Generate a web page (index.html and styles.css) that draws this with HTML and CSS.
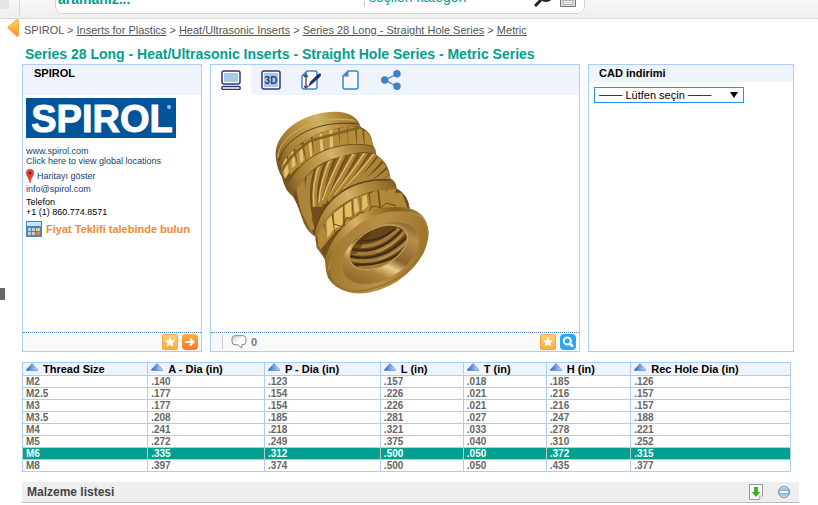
FILE: index.html
```
<!DOCTYPE html>
<html lang="tr">
<head>
<meta charset="utf-8">
<title>SPIROL - Series 28 Long</title>
<link rel="stylesheet" href="styles.css">
</head>
<body>
<header class="top">
  <span class="top-block"></span>
  <form class="search">
    <input class="search-text" type="text" value="aramanız..." aria-label="Arama">
    <select class="search-cat" aria-label="Kategori"><option>seçilen kategori</option></select>
    <svg class="chev" width="8" height="6" viewBox="0 0 8 6"><path d="M1 1l3 3 3-3" fill="none" stroke="#999" stroke-width="1.5"/></svg>
    <button class="plain" type="button" aria-label="Ara"><svg width="22" height="22" viewBox="0 0 22 22"><circle cx="14" cy="9" r="7" fill="none" stroke="#222" stroke-width="2"/><path d="M9 15l-6 6" stroke="#222" stroke-width="3"/></svg></button>
    <button class="plain" type="button" aria-label="Klavye"><svg width="16" height="20" viewBox="0 0 16 20"><path d="M.5 0v19.500h15V0" fill="#ddd" stroke="#777"/><path d="M3 13.500h10v4H3z" fill="#fff" stroke="#aaa"/><path d="M4 15.500h8" stroke="#bbb"/></svg></button>
  </form>
</header>

<nav class="crumbs">
  <a class="back" href="#" aria-label="Geri"><svg width="12" height="18" viewBox="0 0 12 18"><defs><linearGradient id="bk" x2="0" y2="1"><stop offset="0" stop-color="#ffda55"/><stop offset="1" stop-color="#f98a3c"/></linearGradient></defs><path d="M.5 8.500L9.500.8Q11.500 0 11.500 2v14q0 2-2 1z" fill="url(#bk)" stroke="#f6a640"/></svg></a>
  <span>SPIROL &gt; <a href="#">Inserts for Plastics</a> &gt; <a href="#">Heat/Ultrasonic Inserts</a> &gt; <a href="#">Series 28 Long - Straight Hole Series</a> &gt; <a href="#">Metric</a></span>
</nav>

<main class="page">
<h1>Series 28 Long - Heat/Ultrasonic Inserts - Straight Hole Series - Metric Series</h1>

<div class="panels">
  <section class="panel">
    <h2 class="panel-head tall">SPIROL</h2>
    <div class="company">
      <div class="logo"><span>SPIROL</span><i></i></div>
      <a href="#">www.spirol.com</a>
      <a href="#">Click here to view global locations</a>
      <a class="map" href="#"><svg width="8" height="14" viewBox="0 0 8 14"><path d="M4 0a4 4 0 0 1 4 4c0 3-3 5-3.500 10h-1C3 9 0 7 0 4a4 4 0 0 1 4-4z" fill="#e5463a"/><circle cx="4" cy="4" r="1.500" fill="#7d1712"/></svg>Haritayı göster</a>
      <a href="#">info@spirol.com</a>
      <p class="phone">Telefon<br>+1 (1) 860.774.8571</p>
      <a class="quote" href="#"><svg width="16" height="16" viewBox="0 0 16 16"><path d="M0 0h16v16H0z" fill="#4d84b5"/><path d="M1 1h14v4H1z" fill="#bfe6fb"/><path d="M2 7h3v3H2zM6 7h3v3H6zM10 7h4v3h-4zM2 11h3v3H2zM6 11h3v3H6z" fill="#c6ccd2"/><path d="M10 11h4v3h-4z" fill="#f58220"/></svg>Fiyat Teklifi talebinde bulun</a>
    </div>
    <footer class="panel-foot">
      <button class="plain push" type="button" aria-label="Favori"><svg width="16" height="16" viewBox="0 0 16 16"><defs><linearGradient id="st" x2="0" y2="1"><stop offset="0" stop-color="#ffd27a"/><stop offset="1" stop-color="#fdaa38"/></linearGradient></defs><rect x=".5" y=".5" width="15" height="15" rx="1" fill="url(#st)" stroke="#f0a94a"/><path d="M8 3l1.500 3.300 3.600.4-2.700 2.400.8 3.500L8 10.800l-3.200 1.800.8-3.500-2.700-2.400 3.600-.4z" fill="#fff"/></svg></button>
      <button class="plain" type="button" aria-label="İleri"><svg width="16" height="16" viewBox="0 0 16 16"><defs><linearGradient id="go" x2="0" y2="1"><stop offset="0" stop-color="#ffb02e"/><stop offset="1" stop-color="#fa742f"/></linearGradient></defs><rect width="16" height="16" rx="4" fill="url(#go)"/><path d="M3 8h8M8 4.500L11.500 8 8 11.500" fill="none" stroke="#fff" stroke-width="2"/></svg></button>
    </footer>
  </section>

  <section class="panel">
    <div class="tabs">
      <button class="tab active" type="button" aria-label="Resim"><svg width="20" height="20" viewBox="0 0 20 20"><rect x="1" y="1" width="18" height="13" rx="2" fill="#fff" stroke="#333377" stroke-width="1.500"/><path d="M3 3h14v9H3z" fill="#a5cbe8"/><rect x=".7" y="16.500" width="18.600" height="3" rx="1.500" fill="#fff" stroke="#333377" stroke-width="1.400"/></svg></button>
      <button class="tab" type="button" aria-label="3D"><svg width="20" height="20" viewBox="0 0 20 20"><rect x="1" y="1" width="18" height="18" rx="2" fill="#fff" stroke="#333377" stroke-width="1.500"/><path d="M3 3h14v14H3z" fill="#a5cbe8"/><text class="t3d" x="10" y="13.500" text-anchor="middle">3D</text></svg></button>
      <button class="tab" type="button" aria-label="Çizim"><svg width="20" height="20" viewBox="0 0 20 20"><path d="M6 1h8q2 0 2 2v14q0 2-2 2H3q-2 0-2-2V6z" fill="#fff" stroke="#4383c6" stroke-width="1.500"/><path d="M1 6l5-5v5z" fill="#4383c6"/><path d="M5 5v13M3 7l2-2 2 2M3 16l2 2 2-2" fill="none" stroke="#444" stroke-width="1.300"/><path d="M7 17l2-5 8-8q2-1 3 0 0 2-1 3l-8 7z" fill="#2b2b70"/></svg></button>
      <button class="tab" type="button" aria-label="Belge"><svg width="20" height="20" viewBox="0 0 20 20"><path d="M7 1h8q2 0 2 2v14q0 2-2 2H4q-2 0-2-2V6z" fill="#f5f8fd" stroke="#4383c6" stroke-width="1.500"/><path d="M2 6.500L7.500 1v5.500z" fill="#4383c6"/></svg></button>
      <button class="tab" type="button" aria-label="Paylaş"><svg width="20" height="20" viewBox="0 0 20 20"><path d="M16 4L4 10l12 6.500" fill="none" stroke="#3f7fc4" stroke-width="1.300"/><g fill="#3f7fc4"><circle cx="16" cy="3.700" r="3.700"/><circle cx="3.700" cy="10" r="3.700"/><circle cx="16" cy="16.300" r="3.700"/></g></svg></button>
    </div>
    <div class="photo">
      <svg width="190" height="200" viewBox="0 0 570 600" role="img" aria-label="Insert">
        <defs>
          <linearGradient id="br" gradientUnits="userSpaceOnUse" x1="70" y1="260" x2="400" y2="130"><stop offset="0" stop-color="#6b4d1a"/><stop offset=".14" stop-color="#a07a30"/><stop offset=".32" stop-color="#bb9646"/><stop offset=".48" stop-color="#d2b266"/><stop offset=".65" stop-color="#b08a3c"/><stop offset=".85" stop-color="#8d692a"/><stop offset="1" stop-color="#624415"/></linearGradient>
          <linearGradient id="fl" gradientUnits="userSpaceOnUse" x1="190" y1="490" x2="490" y2="340"><stop offset="0" stop-color="#8f6a23"/><stop offset=".25" stop-color="#b0893a"/><stop offset=".42" stop-color="#d6b362"/><stop offset=".6" stop-color="#ab8333"/><stop offset=".8" stop-color="#805c20"/><stop offset="1" stop-color="#a8823b"/></linearGradient>
          <linearGradient id="fc" gradientUnits="userSpaceOnUse" x1="240" y1="380" x2="460" y2="550"><stop offset="0" stop-color="#a17a2e"/><stop offset=".5" stop-color="#b89147"/><stop offset="1" stop-color="#9d752c"/></linearGradient>
          <linearGradient id="bv" gradientUnits="userSpaceOnUse" x1="260" y1="530" x2="470" y2="390"><stop offset="0" stop-color="#8a6529"/><stop offset=".25" stop-color="#ad8239"/><stop offset=".38" stop-color="#ebce8d"/><stop offset=".5" stop-color="#8b632c"/><stop offset=".8" stop-color="#b78f4c"/><stop offset="1" stop-color="#7d5922"/></linearGradient>
          <clipPath id="k1"><path d="M60 210C82 145 170 75 302 80Q330 95 340 138C230 115 130 165 84 252z"/></clipPath>
          <clipPath id="k2"><path d="M98 288C130 220 220 145 347 162Q382 190 392 240C275 232 190 290 160 405z"/></clipPath>
          <clipPath id="k3"><path d="M166 420C190 330 285 270 410 265Q445 285 449 326C335 313 235 370 196 475z"/></clipPath>
          <clipPath id="bore"><ellipse cx="355" cy="442" rx="92" ry="54" transform="rotate(-29 355 442)"/></clipPath>
        </defs>
        <path d="M47 168C43 98 128 33 230 35Q292 38 302 82Q336 94 338 135Q350 148 348 166Q386 185 391 235Q410 245 410 266Q440 282 449 323L420 450 203 500Q197 478 170 443L166 411Q136 392 124 349L104 293Q75 277 66 232Q50 205 47 168z" fill="url(#br)"/>
        <path d="M53 173C60 105 155 43 284 61" fill="none" stroke="#c9aa58" stroke-width="4"/>
        <path d="M57 184C72 113 172 57 295 72" fill="none" stroke="#5e4216" stroke-width="3"/>
        <path d="M62 211C82 145 170 82 302 85" fill="none" stroke="#69491a" stroke-width="3"/>
        <g clip-path="url(#k1)">
          <path d="M50 70h310v200H50z" fill="#76531c"/>
          <path d="M70 245L62 190l17-22 16 41zM91 225l-8-62 17-14 14 51zM114 203l-9-59 20-13 13 55zM139 188l-9-65 22-13 12 61zM164 174l-7-66 22-13 12 64zM190 164l-4-69 22-10 9 66zM215 158l-2-70 21-6 7 68zM240 154l-1-72 22-2 4 70zM265 150l-1-72 21 2 5 68zM290 150l1-71 16 10 7 59zM315 148l-3-58 28 21v35z" fill="#b58c3a"/>
          <path d="M74 235l-4-51 9-11 7 45zM96 205l-3-47 7-5 7 42zM121 190l-5-49 10-6 5 46zM152 178l-7-58 8-4 4 52zM182 162l-4-59 8-4 5 57zM210 158l-2-67 9-3 3 61z" fill="#e2c274"/>
          <path d="M62 217Q91 163 151 122L301 82" fill="none" stroke="#866225" stroke-width="8"/>
        </g>
        <path d="M80 257C120 166 230 117 339 138" fill="none" stroke="#755121" stroke-width="3"/>
        <path d="M101 291C133 220 184 186 224 177L237 188 252 171Q305 150 348 163" fill="none" stroke="#77551e" stroke-width="4"/>
        <g clip-path="url(#k2)">
          <path d="M80 120h340v310H80z" fill="#735019"/>
          <g fill="none" stroke="#ab853a" stroke-width="15">
            <path d="M113 250Q135 370 160 420"/><path d="M126 235Q130 310 158 390"/><path d="M155 205Q133 270 150 355"/><path d="M186 180Q158 250 165 320"/><path d="M220 157Q184 240 180 320"/><path d="M257 150Q217 225 190 310"/><path d="M293 142Q254 220 203 302"/><path d="M327 140Q286 213 222 291"/><path d="M352 153Q304 220 248 275"/><path d="M369 165Q331 217 280 256"/><path d="M384 183Q353 223 306 249"/><path d="M398 200Q373 231 332 250"/><path d="M408 218Q389 238 360 248"/>
          </g>
          <g fill="none" stroke="#dfbf72" stroke-width="4">
            <path d="M182 184Q154 250 162 320"/><path d="M216 165Q180 240 177 306"/><path d="M252 155Q213 226 187 300"/><path d="M288 148Q249 218 201 294"/><path d="M322 145Q281 211 222 283"/><path d="M346 155Q300 218 247 268"/>
          </g>
          <g fill="none" stroke="#a0661f" stroke-width="3"><path d="M272 158Q235 230 198 300"/><path d="M310 150Q270 216 215 290"/><path d="M340 154Q294 218 240 275"/><path d="M235 170Q200 235 187 295"/></g>
        </g>
        <path d="M161 404C184 302 267 232 391 240" fill="none" stroke="#604118" stroke-width="4"/>
        <g clip-path="url(#k3)">
          <path d="M150 250h320v240H150z" fill="#704d1b"/>
          <path d="M176 455l-5-58 19-27 14 52zM201 425l-8-61 22-21 9 55zM225 396l-6-54 30-25 2 61zM255 375l-4-59 24-16 5 65zM282 361l-5-63 21-10 6 65zM304 350l-4-63 25-8 8 62zM334 340l-5-59 23-11 7 63zM364 332l-7-61 20-3 22 58zM391 328l-11-60 24 1 12 56zM416 336l-9-58 19 1 19 53z" fill="#b18838"/>
          <path d="M202 415l-2-55 14-13 7 41zM224 387l-2-48 26-20v55zM256 355l-1-40 18-11 2 43zM283 342l-2-44 10-4 7 40zM307 332v-43l12-5 5 34z" fill="#e2c068"/>
          <path d="M165 408Q207 321 286 285T410 267" fill="none" stroke="#a87f36" stroke-width="14"/>
          <path d="M222 372l24 8 14-28 22 8 16-24 24 4 16-22 26 5 14-14 30 8" fill="none" stroke="#6a491a" stroke-width="3"/>
        </g>
        <path d="M195 474Q235 363 331 331Q391 315 448 325Q501 340 506 395Q508 431 476 480Q425 552 323 576Q235 586 204 533Q195 508 195 474z" fill="url(#fl)"/>
        <path d="M205 512C216 426 308 351 401 337Q472 331 498 363" fill="none" stroke="#c9a95e" stroke-width="2"/>
        <ellipse cx="356" cy="457" rx="162" ry="103" transform="rotate(-33 356 457)" fill="url(#fc)"/>
        <ellipse cx="361" cy="459" rx="127" ry="79" transform="rotate(-31 361 459)" fill="url(#bv)" stroke="#b08a45" stroke-width="2"/>
        <ellipse cx="355" cy="442" rx="97" ry="58" transform="rotate(-29 355 442)" fill="#c09a55"/>
        <g clip-path="url(#bore)">
          <path d="M230 340h250v200H230z" fill="#65451b"/>
          <g fill="none"><path d="M264 433Q345 458 417 385M267 456Q359 482 438 390M269 479Q372 502 455 411M295 503Q386 506 445 451" stroke="#a37a38" stroke-width="11"/><path d="M286 420Q352 432 407 386M265 447Q358 468 426 391M270 469Q369 490 444 407M281 493Q377 503 450 437" stroke="#3f2a13" stroke-width="5"/><path d="M349 456Q395 440 425 406M356 479Q409 462 438 426" stroke="#c9a257" stroke-width="3"/></g>
          <path d="M260 465q4-46 47-72l42-20-60 88z" fill="#51350f" opacity=".6"/>
        </g>
        <path d="M211 529Q240 585 319 570Q441 545 494 447" fill="none" stroke="#98712c" stroke-width="4"/>
      </svg>
    </div>
    <footer class="panel-foot">
      <span class="comments"><svg width="16" height="14" viewBox="0 0 16 14"><defs><linearGradient id="cm" x2="1" y2="1"><stop offset="0" stop-color="#ccc"/><stop offset=".5" stop-color="#fff"/></linearGradient></defs><path d="M4 .7h8q3 0 3 3v3q0 3-3 3h-1l-.5 3.300L7 9.700H4q-3 0-3-3v-3q0-3 3-3z" fill="url(#cm)" stroke="#888"/></svg>0</span>
      <button class="plain push" type="button" aria-label="Favori"><svg width="16" height="16" viewBox="0 0 16 16"><rect x=".5" y=".5" width="15" height="15" rx="1" fill="url(#st)" stroke="#f0a94a"/><path d="M8 3l1.500 3.300 3.600.4-2.700 2.400.8 3.500L8 10.800l-3.200 1.800.8-3.500-2.700-2.400 3.600-.4z" fill="#fff"/></svg></button>
      <button class="plain" type="button" aria-label="Büyüt"><svg width="16" height="16" viewBox="0 0 16 16"><rect width="16" height="16" rx="4" fill="#2ba6f5"/><circle cx="7.300" cy="7" r="3.500" fill="none" stroke="#fff" stroke-width="2"/><path d="M9.800 9.500l3 3" stroke="#fff" stroke-width="2.500"/></svg></button>
    </footer>
  </section>

  <section class="panel">
    <h2 class="panel-head"><label for="cad">CAD indirimi</label></h2>
    <div class="cad">
      <select id="cad"><option>─── Lütfen seçin ───</option></select>
      <svg class="cad-arrow" width="8" height="6" viewBox="0 0 8 6"><path d="M0 0h8L4 6z"/></svg>
    </div>
  </section>
</div>

<svg class="defs" width="0" height="0"><defs><linearGradient id="tr"><stop offset="0" stop-color="#2563c8"/><stop offset="1" stop-color="#c3dcf5"/></linearGradient><symbol id="sort" viewBox="0 0 12 8"><path d="M6 .5L11.500 6.500v1H.5v-1z" fill="url(#tr)" stroke="#5b87c8" stroke-width=".7"/></symbol></defs></svg>
<table class="sizes">
  <colgroup><col class="c1"><col class="c2"><col class="c3"><col class="c4"><col class="c5"><col class="c6"><col class="c7"></colgroup>
  <thead><tr>
    <th><svg><use href="#sort"/></svg>Thread Size</th><th><svg><use href="#sort"/></svg>A - Dia (in)</th><th><svg><use href="#sort"/></svg>P - Dia (in)</th><th><svg><use href="#sort"/></svg>L (in)</th><th><svg><use href="#sort"/></svg>T (in)</th><th><svg><use href="#sort"/></svg>H (in)</th><th><svg><use href="#sort"/></svg>Rec Hole Dia (in)</th>
  </tr></thead>
  <tbody>
    <tr><td>M2</td><td>.140</td><td>.123</td><td>.157</td><td>.018</td><td>.185</td><td>.126</td></tr>
    <tr><td>M2.5</td><td>.177</td><td>.154</td><td>.226</td><td>.021</td><td>.216</td><td>.157</td></tr>
    <tr><td>M3</td><td>.177</td><td>.154</td><td>.226</td><td>.021</td><td>.216</td><td>.157</td></tr>
    <tr><td>M3.5</td><td>.208</td><td>.185</td><td>.281</td><td>.027</td><td>.247</td><td>.188</td></tr>
    <tr><td>M4</td><td>.241</td><td>.218</td><td>.321</td><td>.033</td><td>.278</td><td>.221</td></tr>
    <tr><td>M5</td><td>.272</td><td>.249</td><td>.375</td><td>.040</td><td>.310</td><td>.252</td></tr>
    <tr class="selected"><td>M6</td><td>.335</td><td>.312</td><td>.500</td><td>.050</td><td>.372</td><td>.315</td></tr>
    <tr><td>M8</td><td>.397</td><td>.374</td><td>.500</td><td>.050</td><td>.435</td><td>.377</td></tr>
  </tbody>
</table>

<section class="bom">
  <h2>Malzeme listesi</h2>
  <button class="plain push" type="button" aria-label="İndir"><svg width="14" height="16" viewBox="0 0 14 16"><path d="M.5.5h13V12l-3 3.500H.5z" fill="#f8f8f8" stroke="#999"/><path d="M13.500 12h-3v3.500" fill="#fff" stroke="#bbb"/><path d="M5 3h4v5h2.500L7 13 2.500 8H5z" fill="#43b02a"/></svg></button>
  <button class="plain" type="button" aria-label="Kapat"><svg width="14" height="14" viewBox="0 0 14 14"><defs><linearGradient id="mn" x2="0" y2="1"><stop offset="0" stop-color="#d5e3f0"/><stop offset=".5" stop-color="#6fa5d6"/><stop offset="1" stop-color="#c8e4f8"/></linearGradient></defs><circle cx="7" cy="7" r="5.700" fill="url(#mn)" stroke="#7d9fbe"/><path d="M3 6h8v2H3z" fill="#fff"/></svg></button>
</section>
</main>
<span class="side-tab"></span>
</body>
</html>
```
FILE: styles.css
```
* { box-sizing: border-box; }
body {
  margin: 0;
  background: #fff;
  color: #000;
  font: 11px/12px "Liberation Sans", Arial, sans-serif;
  overflow: hidden;
}
h1, h2, p { margin: 0; }
svg { display: block; flex: none; }
.plain { border: 0; padding: 0; background: none; }
.push { margin-left: auto; }
.defs { position: absolute; }

.top {
  display: flex;
  align-items: flex-end;
  height: 19px;
  overflow: hidden;
  background: linear-gradient(#f7f7f7, #efefef);
  border-bottom: 1px solid #d8d8d8;
}
.top-block {
  width: 20px;
  height: 15px;
  margin: 0 35px 3px 0;
  border-right: 1px solid #d8d8d8;
  background: linear-gradient(#e4e4e4, #e4e4e4) 0 0 / 9px 9px no-repeat;
}
.search {
  display: flex;
  align-items: flex-end;
  flex: 0 1 530px;
  height: 32px;
  margin-bottom: 4px;
  padding: 0 8px 2px 2px;
  background: #fff;
  border: 1px solid #d5d5d5;
  border-radius: 8px;
}
.search-text, .search-cat {
  height: 24px;
  border: 0;
  padding: 0;
  background: none;
  color: #00a090;
  font: bold 14px/16px "Liberation Sans", Arial, sans-serif;
}
.search-text { flex: 1; min-width: 0; }
.search-cat {
  width: 142px;
  height: 20px;
  margin-bottom: 4px;
  padding-left: 4px;
  border-left: 1px solid #ccc;
  border-radius: 0;
  appearance: none;
  font-weight: normal;
}
.chev { margin: 0 10px 10px 2px; }
.search .plain { margin: 0 0 4px 6px; }

.crumbs {
  display: flex;
  align-items: flex-start;
  gap: 5px;
  padding-left: 7px;
  color: #555;
}
.crumbs span { padding-top: 5px; }
.crumbs span a { color: #555; }

.page { padding: 0 19px 0 22px; }
h1 {
  padding: 9px 0 1px 3px;
  color: #00a090;
  font-size: 14px;
  line-height: 17px;
}
.panels {
  display: grid;
  grid-template-columns: 180fr 370fr 206fr;
  gap: 8px;
  margin-right: 5px;
}
.panel {
  display: flex;
  flex-direction: column;
  min-width: 0;
  min-height: 288px;
  border: 1px solid #abcdf8;
}
.panel-head {
  height: 17px;
  padding: 2px 10px;
  background: #eff3fb;
  font-size: 11px;
}
.panel-head.tall { height: 30px; padding-left: 11px; }
.company {
  display: flex;
  flex-direction: column;
  align-items: flex-start;
  padding: 3px;
  font-size: 9px;
  line-height: 10px;
}
.company a { color: #15406f; text-decoration: none; }
.logo {
  display: flex;
  justify-content: center;
  width: 150px;
  height: 40px;
  margin-bottom: 8px;
  background: #00559a;
  color: #fff;
  font: bold 38px/42px "Liberation Sans", Arial, sans-serif;
  -webkit-text-stroke: 1px #fff;
}
.logo i { width: 4px; height: 4px; margin: 7px 0 0 -6px; border-radius: 50%; background: #9fc0dd; }
.company .map { display: flex; align-items: center; gap: 3px; margin: 3px 0 1px; }
.phone { margin: 3px 0 4px; }
.company .quote {
  display: flex;
  align-items: center;
  gap: 4px;
  color: #f58a2c;
  font-size: 11px;
  font-weight: bold;
  white-space: nowrap;
}
.panel-foot {
  display: flex;
  align-items: center;
  gap: 4px;
  height: 19px;
  margin-top: auto;
  padding-right: 3px;
  background: #f9f9f9;
  border-top: 1px dotted #4a87c7;
}
.comments {
  display: flex;
  align-items: center;
  gap: 4px;
  margin-left: 11px;
  padding-left: 8px;
  border-left: 1px solid #ccc;
  color: #777;
  font-weight: bold;
}
.tabs { display: flex; height: 30px; background: #eff3fb; }
.tab { width: 40px; padding: 0 10px; border: 0; background: none; }
.tab.active { background: #fff; }
.t3d { fill: #333377; font: bold 10px "Liberation Sans", Arial, sans-serif; }
.photo { padding: 5px 0 0 49px; }

.cad { display: flex; align-items: center; padding: 5px; }
.cad select {
  width: 150px;
  height: 16px;
  padding: 0 4px;
  border: 1px solid #2a8ff0;
  border-radius: 0;
  background: #fff;
  color: #000;
  appearance: none;
  font: 11px/14px "Liberation Sans", Arial, sans-serif;
}
.cad-arrow { margin-left: -14px; pointer-events: none; }

.sizes {
  width: calc(100% - 8px);
  margin-top: 10px;
  border-collapse: collapse;
  table-layout: fixed;
}
.sizes th, .sizes td {
  height: 12px;
  padding: 0 3px;
  border: 1px solid #abcdf8;
  text-align: left;
  white-space: nowrap;
  font-size: 10px;
  font-weight: bold;
  line-height: 11px;
}
.sizes td { color: #666; }
.sizes th { height: 13px; background: #eff3fb; font-size: 11px; line-height: 12px; }
.sizes th svg { float: left; width: 12px; height: 8px; margin-right: 5px; }
.sizes .selected td { background: #00a090; color: #fff; border-color: #00a090 #c5c5c5 #c5c5c5; }
.c1 { width: 16.3%; }
.c2 { width: 15.2%; }
.c3 { width: 15.1%; }
.c4, .c5 { width: 10.8%; }
.c6 { width: 11%; }

.bom {
  display: flex;
  align-items: center;
  gap: 14px;
  height: 21px;
  margin-top: 10px;
  padding: 0 8px 0 5px;
  background: #eee;
  border-bottom: 1px solid #bbb;
}
.bom h2 { color: #444; font-size: 12px; line-height: 16px; }
.side-tab { position: absolute; left: 0; top: 288px; width: 5px; height: 12px; background: #666; }
```
